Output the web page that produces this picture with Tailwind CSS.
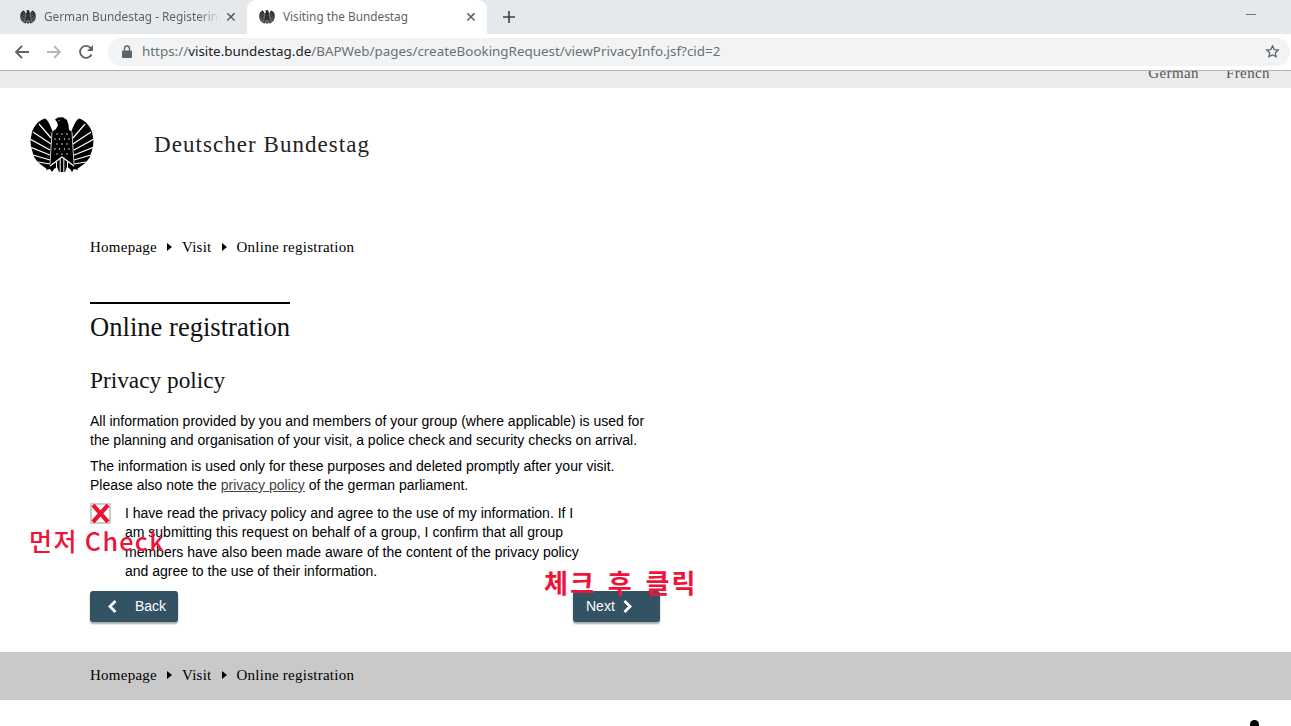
<!DOCTYPE html>
<html lang="en">
<head>
  <meta charset="UTF-8" />
  <title>Visiting the Bundestag</title>
  <script src="https://cdn.jsdelivr.net/npm/@tailwindcss/browser@4"></script>
</head>
<body class="bg-white">
  <svg width="0" height="0" class="absolute">
    <symbol id="eagle" viewBox="0 0 64 56">
      <!-- left wing -->
      <path fill="currentColor" d="M15 1.500 C9 3 4 9 2 15 L0.500 23 L1 30 L2 33 L4 40 L7 44 L10 47 L14 50 L17 52 L21 48 L22.500 14 C20 8 18 3 15 1.500 Z"/>
      <!-- right wing -->
      <path fill="currentColor" d="M49 1.500 C55 3 60 9 62 15 L63.500 23 L63 30 L62 33 L60 40 L57 44 L54 47 L50 50 L47 52 L43 48 L41.500 14 C44 8 46 3 49 1.500 Z"/>
      <!-- head, neck and body -->
      <path fill="currentColor" d="M25 2.500 L28 .5 L33 .3 L37 3 L38.500 8 L39 13 L42 15 L44 46 L46 49 L48 53 L44 52 L42 55 L40 52 L37 50 L35 55 L29 55 L27 50 L24 52 L22 55 L20 52 L16 53 L18 49 L20 46 L22 15 L26 12 L28 8 L27 5 Z"/>
      <g fill="none" stroke="#fff" stroke-width="1.200">
        <path d="M9 7 L21 21 M3 15 L21 27 M0 22 L20 33 M0 30 L20 38 M3 38 L20 43 M8 45 L20 47"/>
        <path d="M55 7 L43 21 M61 15 L43 27 M64 22 L44 33 M64 30 L44 38 M61 38 L44 43 M56 45 L44 47"/>
        <path d="M22 15 L20 47 M42 15 L44 47" stroke-width=".8"/>
        <path d="M20 49 L32 40 L44 49" stroke-width="1.300"/>
        <path d="M26.500 45 V55 M30.200 42 V55 M33.800 42 V55 M37.500 45 V55" stroke-width="1"/>
      </g>
      <g fill="#fff">
        <circle cx="29" cy="3.500" r=".6"/>
        <circle cx="27" cy="17" r=".7"/><circle cx="32" cy="17" r=".7"/><circle cx="37" cy="17" r=".7"/>
        <circle cx="25" cy="22" r=".7"/><circle cx="29.500" cy="22" r=".7"/><circle cx="34.500" cy="22" r=".7"/><circle cx="39" cy="22" r=".7"/>
        <circle cx="27" cy="27" r=".7"/><circle cx="32" cy="27" r=".7"/><circle cx="37" cy="27" r=".7"/>
        <circle cx="25" cy="32" r=".7"/><circle cx="29.500" cy="32" r=".7"/><circle cx="34.500" cy="32" r=".7"/><circle cx="39" cy="32" r=".7"/>
        <circle cx="27" cy="37" r=".7"/><circle cx="32" cy="37" r=".7"/><circle cx="37" cy="37" r=".7"/>
      </g>
    </symbol>
  </svg>

  <div class="relative w-[1291px] h-[726px] overflow-hidden font-['Liberation_Sans',sans-serif] text-[14px] text-black">
    <!-- tabs -->
    <div class="flex items-center h-[34px] bg-[#e6e9ec] text-[11.800px] text-[#5f6368] font-['Noto_Sans',sans-serif]">
      <div class="flex items-center w-[247px] h-full pl-[20px] pr-[10px]">
        <svg class="w-[16px] h-[16px] text-[#222]"><use href="#eagle"/></svg>
        <span class="ml-[8px] w-[176px] overflow-hidden whitespace-nowrap [mask-image:linear-gradient(to_right,black_88%,transparent)]">German Bundestag - Registering</span>
        <span class="ml-auto text-[14px] leading-none text-[#555]">✕</span>
      </div>
      <div class="flex items-center w-[240px] h-full pl-[12px] pr-[10px] bg-white rounded-t-[9px]">
        <svg class="w-[16px] h-[16px] text-[#222]"><use href="#eagle"/></svg>
        <span class="ml-[8px] whitespace-nowrap">Visiting the Bundestag</span>
        <span class="ml-auto text-[14px] leading-none text-[#555]">✕</span>
      </div>
      <svg class="ml-[15px] w-[14px] h-[14px]" viewBox="0 0 14 14" fill="none" stroke="#3c4043" stroke-width="1.600"><path d="M7 1v12M1 7h12"/></svg>
      <div class="ml-auto mr-[35px] mb-[5px] w-[10px] h-px bg-[#777]"></div>
    </div>
    <!-- toolbar -->
    <div class="flex items-center h-[37px] bg-white border-b border-[#b3b3b3] pb-px">
      <svg class="ml-[14px] w-[16px] h-[16px]" viewBox="0 0 16 16" fill="none" stroke="#5f6368" stroke-width="1.800"><path d="M15 8H2M8 2 2 8l6 6"/></svg>
      <svg class="ml-[16px] w-[16px] h-[16px]" viewBox="0 0 16 16" fill="none" stroke="#b4b7bb" stroke-width="1.800"><path d="M1 8h13M8 2l6 6-6 6"/></svg>
      <svg class="ml-[16px] w-[16px] h-[16px]" viewBox="0 0 16 16" fill="none" stroke="#5f6368" stroke-width="1.800"><path d="M13.500 10.500A6 6 0 1 1 13 4.500"/><path fill="#5f6368" stroke="none" d="M15 1v6H9z"/></svg>
      <div class="flex items-center ml-[14px] w-[1182px] h-[28px] rounded-full bg-[#f1f3f4] pl-[14px] pr-[10px] text-[13.400px] font-['Noto_Sans',sans-serif] text-[#6b7075]">
        <svg class="w-[10px] h-[13px]" viewBox="0 0 10 13"><path fill="#5f6368" d="M1 5.500h8a1 1 0 0 1 1 1V12a1 1 0 0 1-1 1H1a1 1 0 0 1-1-1V6.500a1 1 0 0 1 1-1z"/><path fill="none" stroke="#5f6368" stroke-width="1.300" d="M2.500 6V3.500a2.500 2.500 0 0 1 5 0V6"/></svg>
        <span class="ml-[10px] whitespace-nowrap">https://<span class="text-[#202124]">visite.bundestag.de</span>/BAPWeb/pages/createBookingRequest/viewPrivacyInfo.jsf?cid=2</span>
        <svg class="ml-auto w-[15px] h-[15px]" viewBox="0 0 24 24" fill="none" stroke="#5f6368" stroke-width="2"><path d="M12 3l2.800 6 6.500.7-4.800 4.400 1.300 6.400L12 17.300 6.200 20.500l1.300-6.400L2.700 9.700 9.200 9z"/></svg>
      </div>
    </div>

    <!-- language bar, scrolled so that it is cut off at the top -->
    <div class="flex justify-end items-end gap-[27px] h-[17px] overflow-hidden bg-[#ebebeb] pr-[21px] pb-[6px] font-['Liberation_Serif',serif] text-[15px] leading-[17px] tracking-[0.4px] text-[#555]">
      <span>German</span>
      <span>French</span>
    </div>

    <!-- page header -->
    <header class="flex items-center h-[112px] pl-[30px] pt-[2px]">
      <svg class="w-[64px] h-[56px] text-black"><use href="#eagle"/></svg>
      <span class="ml-[60px] font-['Liberation_Serif',serif] text-[23px] tracking-[1.050px] text-[#222]">Deutscher Bundestag</span>
    </header>

    <main class="w-[660px] pl-[90px]">
      <nav class="flex items-center h-[20px] mt-[37px] font-['Liberation_Serif',serif] text-[15px] tracking-[0.25px]">
        <span>Homepage</span>
        <span class="mx-[10px] w-0 h-0 border-y-[4px] border-y-transparent border-l-[5px] border-l-black"></span>
        <span>Visit</span>
        <span class="mx-[10px] w-0 h-0 border-y-[4px] border-y-transparent border-l-[5px] border-l-black"></span>
        <span>Online registration</span>
      </nav>
      <h1 class="w-fit mt-[45px] pt-[8px] border-t-2 border-black font-['Liberation_Serif',serif] text-[26.600px] leading-[30px] text-[#111]">Online registration</h1>
      <h2 class="mt-[23px] font-['Liberation_Serif',serif] text-[23.300px] leading-[30px] text-[#111]">Privacy policy</h2>
      <p class="mt-[17px] leading-[19px]">All information provided by you and members of your group (where applicable) is used for the planning and organisation of your visit, a police check and security checks on arrival.</p>
      <p class="mt-[7px] leading-[19px]">The information is used only for these purposes and deleted promptly after your visit.<br />Please also note the <a class="underline text-[#444]" href="#">privacy policy</a> of the german parliament.</p>
      <div class="flex mt-[8px]">
        <div class="shrink-0 w-[21px] h-[21px] border-2 border-[#ccc] bg-white flex items-center justify-center">
          <svg class="w-[19px] h-[19px] shrink-0" viewBox="0 0 19 19" fill="none" stroke="#ee1133" stroke-width="4.200"><path d="M2 1l15 17M17 1 2 18"/></svg>
        </div>
        <p class="ml-[14px] w-[460px] pt-[1px] leading-[19.300px]">I have read the privacy policy and agree to the use of my information. If I am submitting this request on behalf of a group, I confirm that all group members have also been made aware of the content of the privacy policy and agree to the use of their information.</p>
      </div>
      <div class="flex justify-between mt-[10px]">
        <a class="flex items-center w-[88px] h-[31px] pl-[17px] rounded-[3px] bg-[#335263] text-white shadow-[0_2px_2px_rgba(0,0,0,0.35)]" href="#">
          <svg class="w-[11px] h-[13px]" viewBox="0 0 11 13" fill="none" stroke="#fff" stroke-width="2.800"><path d="M8.500 1 3 6.500 8.500 12"/></svg>
          <span class="ml-[17px]">Back</span>
        </a>
        <a class="flex items-center w-[87px] h-[31px] pl-[13px] rounded-[3px] bg-[#335263] text-white shadow-[0_2px_2px_rgba(0,0,0,0.35)]" href="#">
          <span>Next</span>
          <svg class="ml-[7px] w-[11px] h-[13px]" viewBox="0 0 11 13" fill="none" stroke="#fff" stroke-width="2.800"><path d="M2.500 1 8 6.500 2.500 12"/></svg>
        </a>
      </div>
    </main>

    <footer class="flex items-center h-[48px] mt-[30px] pb-[2px] pl-[90px] bg-[#c9c9c9] font-['Liberation_Serif',serif] text-[15px] tracking-[0.25px]">
      <span>Homepage</span>
      <span class="mx-[10px] w-0 h-0 border-y-[4px] border-y-transparent border-l-[5px] border-l-black"></span>
      <span>Visit</span>
      <span class="mx-[10px] w-0 h-0 border-y-[4px] border-y-transparent border-l-[5px] border-l-black"></span>
      <span>Online registration</span>
    </footer>

    <!-- red notes painted over the screenshot -->
    <span class="absolute left-[29px] top-[521px] font-['Noto_Sans_CJK_KR',sans-serif] font-medium text-[25px] leading-[38px] tracking-[1.400px] whitespace-nowrap text-[#f01238]">먼저 Check</span>
    <span class="absolute left-[544px] top-[563px] font-['Noto_Sans_CJK_KR',sans-serif] font-bold text-[26px] leading-[38px] tracking-[2px] [word-spacing:4px] whitespace-nowrap text-[#f01238]">체크 후 클릭</span>
    <!-- dot at bottom right -->
    <div class="absolute left-[1250px] top-[720px] w-[9px] h-[12px] rounded-full bg-black"></div>
  </div>
</body>
</html>
